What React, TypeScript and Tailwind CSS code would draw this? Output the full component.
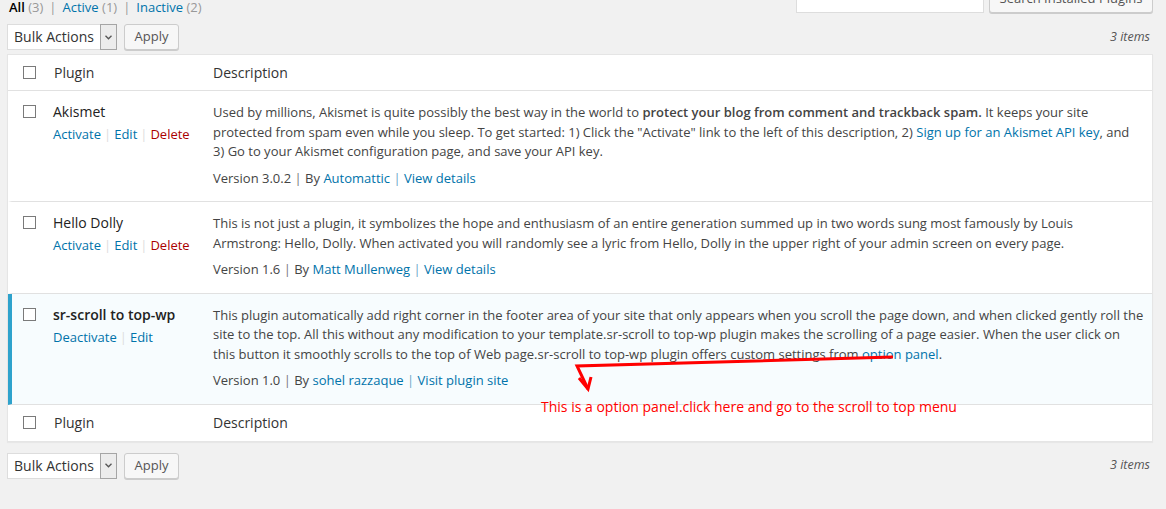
import React from "react";

interface Plugin {
  name: string;
  active: boolean;
  actions: { label: string; danger?: boolean }[];
  lines: React.ReactNode[];
  version: string;
  author: string;
  detailsLabel: string;
}

const PLUGINS: Plugin[] = [
  {
    name: "Akismet",
    active: false,
    actions: [{ label: "Activate" }, { label: "Edit" }, { label: "Delete", danger: true }],
    lines: [
      <>
        Used by millions, Akismet is quite possibly the best way in the world to{" "}
        <strong className="font-semibold">protect your blog from comment and trackback spam.</strong> It keeps your
        site
      </>,
      <>
        protected from spam even while you sleep. To get started: 1) Click the "Activate" link to the left of this
        description, 2) <a className="text-[#0073aa]">Sign up for an Akismet API key</a>, and
      </>,
      <>3) Go to your Akismet configuration page, and save your API key.</>,
    ],
    version: "3.0.2",
    author: "Automattic",
    detailsLabel: "View details",
  },
  {
    name: "Hello Dolly",
    active: false,
    actions: [{ label: "Activate" }, { label: "Edit" }, { label: "Delete", danger: true }],
    lines: [
      <>
        This is not just a plugin, it symbolizes the hope and enthusiasm of an entire generation summed up in two words
        sung most famously by Louis
      </>,
      <>
        Armstrong: Hello, Dolly. When activated you will randomly see a lyric from Hello, Dolly in the upper right of
        your admin screen on every page.
      </>,
    ],
    version: "1.6",
    author: "Matt Mullenweg",
    detailsLabel: "View details",
  },
  {
    name: "sr-scroll to top-wp",
    active: true,
    actions: [{ label: "Deactivate" }, { label: "Edit" }],
    lines: [
      <>
        This plugin automatically add right corner in the footer area of your site that only appears when you scroll the
        page down, and when clicked gently roll the
      </>,
      <>
        site to the top. All this without any modification to your template.sr-scroll to top-wp plugin makes the
        scrolling of a page easier. When the user click on
      </>,
      <>
        this button it smoothly scrolls to the top of Web page.sr-scroll to top-wp plugin offers custom settings from{" "}
        <a className="text-[#0073aa]">option panel</a>.
      </>,
    ],
    version: "1.0",
    author: "sohel razzaque",
    detailsLabel: "Visit plugin site",
  },
];

const Checkbox = () => (
  <span className="block h-[13px] w-[13px] border border-[#7a7a7a] bg-white" />
);

const BulkBar = () => (
  <div className="flex h-[26px] items-center">
    <div className="flex h-[26px] w-[110px] border border-[#ddd] bg-white">
      <span className="flex-1 pl-[6px] text-[14px] leading-[24px] text-[#333]">Bulk Actions</span>
      <span className="-my-px -mr-px flex w-[17px] items-center justify-center border border-[#a5a5a5] bg-[#ececec]">
        <svg width="7" height="5" viewBox="0 0 7 5">
          <path d="M0.5 0.8 L3.5 3.8 L6.5 0.8" fill="none" stroke="#555" strokeWidth="1.3" />
        </svg>
      </span>
    </div>
    <button
      type="button"
      className="ml-[7px] h-[26px] w-[55px] rounded-[3px] border border-[#ccc] bg-[#f7f7f7] text-[13px] text-[#555] shadow-[0_1px_0_#ccc]"
    >
      Apply
    </button>
    <span className="ml-auto mr-[3px] text-[12.5px] italic text-[#555]">3 items</span>
  </div>
);

const HeaderRow = ({ bottom }: { bottom?: boolean }) => (
  <div className={`flex h-[36px] items-center text-[14px] text-[#333] ${bottom ? "" : "border-b border-[#e1e1e1]"}`}>
    <div className="w-[36px] pl-[15px]">
      <Checkbox />
    </div>
    <div className="w-[159px] pl-[10px]">Plugin</div>
    <div className="flex-1 pl-[10px]">Description</div>
  </div>
);

const PluginRow = ({ plugin }: { plugin: Plugin }) => (
  <div
    className={`flex border-b border-[#e1e1e1] ${
      plugin.active ? "border-l-4 border-l-[#2ea2cc] bg-[#f7fcfe]" : "border-l-4 border-l-transparent"
    }`}
  >
    <div className="-ml-[4px] w-[36px] pl-[15px] pt-[14px]">
      <Checkbox />
    </div>
    <div className="w-[159px] pl-[9px] pt-[10px]">
      <div
        className={`mb-[3px] text-[14px] leading-[21px] text-[#222] ${plugin.active ? "font-semibold" : ""}`}
      >
        {plugin.name}
      </div>
      <div className="leading-[19px]">
        {plugin.actions.map((a, i) => (
          <span key={a.label}>
            {i > 0 && <span className="px-[3px] text-[#ddd]">|</span>}
            <a className={a.danger ? "text-[#a00]" : "text-[#0073aa]"}>{a.label}</a>
          </span>
        ))}
      </div>
    </div>
    <div className="flex-1 pb-[13px] pl-[10px] pt-[12px] leading-[19.5px]">
      {plugin.lines.map((line, i) => (
        <div key={i} className="whitespace-nowrap">
          {line}
        </div>
      ))}
      <div className="mt-[7px] whitespace-nowrap">
        Version {plugin.version} <span className="text-[#777]">|</span> By{" "}
        <a className="text-[#0073aa]">{plugin.author}</a> <span className="text-[#6aa6c8]">|</span>{" "}
        <a className="text-[#0073aa]">{plugin.detailsLabel}</a>
      </div>
    </div>
  </div>
);

export default function App() {
  return (
    <div className="relative h-[509px] w-[1166px] overflow-hidden bg-[#f1f1f1] pl-[7px] pr-[13px] font-['Open_Sans',sans-serif] text-[13px] text-[#444]">
      {/* top bar, partly scrolled out of view */}
      <div className="-mt-[15px] flex h-[28px]">
        <div className="pl-[2px] pt-[12px] text-[13px] leading-[20px]">
          <span className="font-semibold text-black">All</span> <span className="text-[#999]">(3)</span>
          <span className="px-[6px] text-[#999]">|</span>
          <a className="text-[#0073aa]">Active</a> <span className="text-[#999]">(1)</span>
          <span className="px-[6px] text-[#999]">|</span>
          <a className="text-[#0073aa]">Inactive</a> <span className="text-[#999]">(2)</span>
        </div>
        <div className="ml-auto flex">
          <div className="h-[28px] w-[188px] border border-[#ddd] bg-white" />
          <button
            type="button"
            className="ml-[5px] h-[28px] w-[164px] rounded-[3px] border border-[#ccc] bg-[#f7f7f7] text-[13px] text-[#555] shadow-[0_1px_0_#ccc]"
          >
            Search Installed Plugins
          </button>
        </div>
      </div>

      <div className="mt-[11px]">
        <BulkBar />
      </div>

      <div className="mt-[4px] border border-[#e5e5e5] bg-white shadow-[0_1px_1px_rgba(0,0,0,0.04)]">
        <HeaderRow />
        {PLUGINS.map((p) => (
          <PluginRow key={p.name} plugin={p} />
        ))}
        <HeaderRow bottom />
      </div>

      <div className="mt-[11px]">
        <BulkBar />
      </div>

      {/* hand-drawn annotation */}
      <svg className="pointer-events-none absolute left-0 top-0" width="1166" height="509">
        <path
          d="M893 357 L577 366 L588 389"
          fill="none"
          stroke="#f00"
          strokeWidth="3"
          strokeLinejoin="miter"
        />
        <path d="M579 378 L588 389 L591 377" fill="none" stroke="#f00" strokeWidth="3" />
      </svg>
      <div className="absolute left-[541px] top-[397px] text-[14px] leading-[20px] text-[#f00]">
        This is a option panel.click here and go to the scroll to top menu
      </div>
    </div>
  );
}
